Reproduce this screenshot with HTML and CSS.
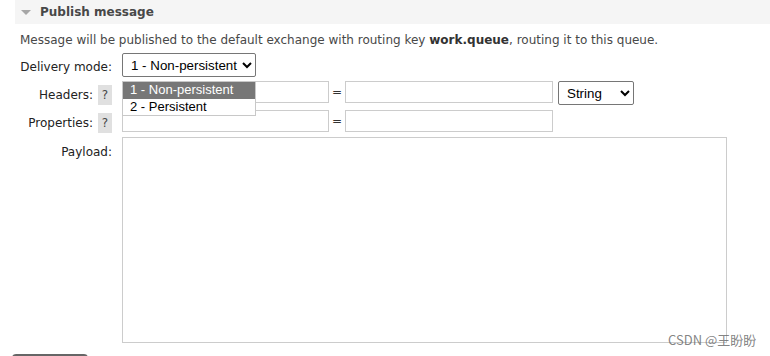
FILE: index.html
```html
<!DOCTYPE html>
<html lang="en">
<head>
<meta charset="utf-8">
<title>Publish message</title>
<link rel="stylesheet" href="styles.css">
</head>
<body>
<div class="panel-head">
  <svg class="caret" width="10" height="5" viewBox="0 0 10 5"><path d="M0 0H10L5 5Z" fill="#a6a6a6"/></svg>
  <span class="title">Publish message</span>
</div>
<p class="desc">Message will be published to the default exchange with routing key <b>work.queue</b>, routing it to this queue.</p>
<div class="form">
  <div class="row row-mode">
    <div class="label">Delivery mode:</div>
    <div class="ctrl mode-wrap">
      <select class="sel sel-mode"><option>1 - Non-persistent</option><option>2 - Persistent</option></select>
      <div class="dropdown">
        <div class="opt opt-active">1 - Non-persistent</div>
        <div class="opt">2 - Persistent</div>
      </div>
    </div>
  </div>
  <div class="row row-headers">
    <div class="label">Headers: <span class="help">?</span></div>
    <div class="ctrl pair">
      <input class="inp inp-key" type="text">
      <span class="eq">=</span>
      <input class="inp inp-val" type="text">
      <select class="sel sel-type"><option>String</option></select>
    </div>
  </div>
  <div class="row row-props">
    <div class="label">Properties: <span class="help">?</span></div>
    <div class="ctrl pair">
      <input class="inp inp-key" type="text">
      <span class="eq">=</span>
      <input class="inp inp-val" type="text">
    </div>
  </div>
  <div class="row row-payload">
    <div class="label label-top">Payload:</div>
    <div class="ctrl"><textarea class="payload"></textarea></div>
  </div>
</div>
<div class="btn"></div>
<div class="watermark">CSDN @王盼盼</div>
</body>
</html>
```
FILE: styles.css
```css
html, body {
  margin: 0;
  padding: 0;
  overflow: hidden;
  height: 356px;
  background: #fff;
}
body {
  position: relative;
  font-family: "DejaVu Sans", Verdana, sans-serif;
  font-size: 12px;
  color: #484848;
}
.panel-head {
  margin-left: 15px;
  height: 24px;
  background: #f5f5f5;
  display: flex;
  align-items: center;
}
.caret {
  margin-left: 6px;
  margin-top: 1px;
}
.title {
  margin-left: 9px;
  font-weight: bold;
  font-size: 12px;
  color: #484848;
}
.desc {
  margin: 8px 0 0 20px;
  line-height: 16px;
  white-space: nowrap;
}
.desc b { color: #333; }
.form {
  margin: 5px 0 0 20px;
}
.row {
  display: flex;
  align-items: flex-start;
}
.label {
  width: 92px;
  flex: none;
  text-align: right;
  color: #222;
  margin-right: 10px;
  white-space: nowrap;
  display: flex;
  justify-content: flex-end;
  align-items: center;
}
.row-mode .label { height: 24px; padding-top: 2px; }
.row-mode { height: 24px; }
.row-headers { margin-top: 4px; height: 24px; }
.row-headers .label { padding-top: 4px; }
.row-props { margin-top: 5px; height: 22px; }
.row-props .label { padding-top: 3px; }
.row-payload { margin-top: 5px; }
.label-top { padding-top: 8px; }
.help {
  display: inline-block;
  width: 14px;
  height: 20px;
  line-height: 20px;
  text-align: center;
  background: #e0e0e0;
  color: #484848;
  margin-left: 5px;
}
.ctrl {
  display: flex;
  align-items: flex-start;
}
.mode-wrap { position: relative; }
.sel {
  font-family: "Liberation Sans", Arial, sans-serif;
  font-size: 13.33px;
  color: #000;
  background: #fff;
  border: 1px solid #767676;
  border-radius: 2px;
  height: 24px;
  margin: 0;
  padding: 0 0 0 4px;
}
.sel-mode { width: 134px; }
.sel-type { width: 76px; margin-left: 5px; }
.inp {
  box-sizing: border-box;
  height: 22px;
  margin: 0;
  border: 1px solid #cccccc;
  padding: 0 3px;
  font-family: "Liberation Sans", Arial, sans-serif;
  font-size: 13px;
}
.inp-key { width: 207px; }
.inp-val { width: 208px; }
.eq {
  width: 16px;
  text-align: center;
  line-height: 22px;
  color: #333;
}
.payload {
  box-sizing: border-box;
  display: block;
  width: 605px;
  height: 206px;
  margin: 0;
  border: 1px solid #cccccc;
  resize: none;
}
.dropdown {
  position: absolute;
  left: 0;
  top: 28px;
  box-sizing: border-box;
  width: 134px;
  height: 35px;
  background: #fff;
  border: 1px solid #c8c8c8;
  font-family: "Liberation Sans", Arial, sans-serif;
  font-size: 13px;
  color: #000;
}
.opt {
  height: 17px;
  line-height: 16px;
  padding-left: 7px;
  white-space: nowrap;
}
.opt-active {
  background: #777777;
  color: #fff;
}
.btn {
  margin: 11px 0 0 12px;
  width: 76px;
  height: 26px;
  background: #666;
  border-radius: 4px;
}
.watermark {
  position: absolute;
  left: 668px;
  top: 331px;
  font-family: "Noto Sans CJK SC", sans-serif;
  font-size: 13px;
  line-height: 18px;
  color: rgba(100, 100, 100, 0.8);
  white-space: nowrap;
}
```
